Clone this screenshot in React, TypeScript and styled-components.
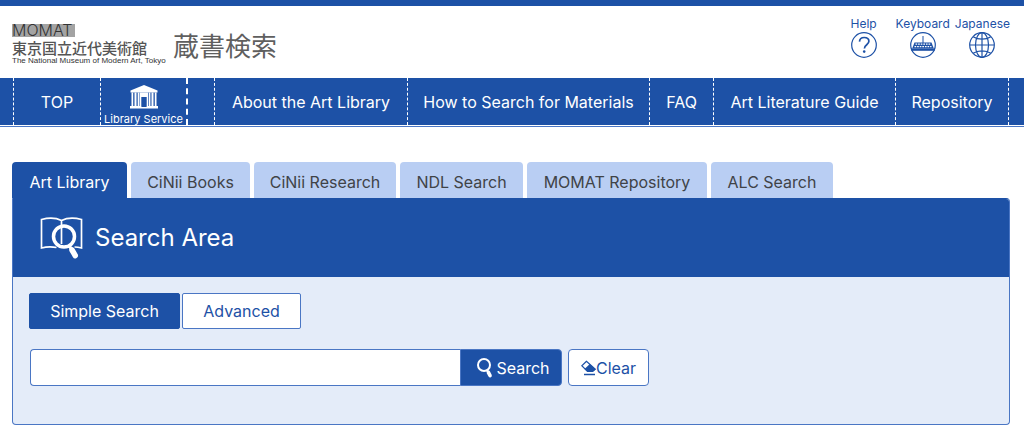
import React from 'react';
import styled, { createGlobalStyle } from 'styled-components';

const blue = '#1d51a6';
const line = '#4a76c4';

const GlobalStyle = createGlobalStyle`
  *, *::before, *::after { box-sizing: border-box; }
  body {
    margin: 0;
    background: #fff;
    color: #3c4043;
    font: 16px/24px Inter, "Noto Sans CJK JP", sans-serif;
  }
  button, input { font: inherit; }
  a { color: inherit; text-decoration: none; }
  svg { flex-shrink: 0; }
`;

const Header = styled.header`
  display: flex;
  justify-content: space-between;
  align-items: flex-start;
  height: 78px;
  padding: 8px 14px 0 12px;
  border-top: 6px solid ${blue};
`;

const Brand = styled.a`
  display: flex;
  align-items: flex-start;
  gap: 4px;
  padding-top: 6px;
`;

const Museum = styled.span`
  display: flex;
  flex-direction: column;
  width: 157px;
`;

const MuseumName = styled.span`
  font: 500 15px/16px "Noto Sans CJK JP", sans-serif;
  color: #555;
  white-space: nowrap;
`;

const MuseumSub = styled.span`
  font: 8px/10px "Liberation Sans", Arial, sans-serif;
  color: #333;
  white-space: nowrap;
`;

const SiteTitle = styled.h1`
  margin: 0;
  padding-top: 7px;
  font: 400 26px/36px "Noto Sans CJK JP", sans-serif;
  color: #5f5f5f;
  white-space: nowrap;
`;

const Tools = styled.nav`
  display: flex;
  gap: 5px;
`;

const Tool = styled.a`
  display: flex;
  flex-direction: column;
  align-items: center;
  min-width: 54px;
  padding-top: 1px;
  font-size: 12px;
  line-height: 17px;
  color: ${blue};
`;

const NavBar = styled.nav`
  display: flex;
  height: 47px;
  padding-left: 13px;
  background: ${blue};
  box-shadow: 0 1px 0 #fff, 0 2px 0 ${line};
`;

const NavItem = styled.a<{ $basis: number; $first?: boolean }>`
  display: flex;
  align-items: center;
  justify-content: center;
  flex: 0 1 ${p => p.$basis}px;
  border-right: 1px dashed #fff;
  border-left: ${p => (p.$first ? '1px dashed #fff' : '0')};
  color: #fff;
  white-space: nowrap;
`;

const LibraryItem = styled.a`
  display: flex;
  flex-direction: column;
  align-items: center;
  flex: 0 1 87px;
  padding-top: 7px;
  border-right: 2px dashed #fff;
  color: #fff;
  font-size: 11px;
  line-height: 14px;
  white-space: nowrap;
`;

const NavGap = styled.span`
  flex: 0 1 27px;
  border-right: 1px dashed #fff;
`;

const Main = styled.main`
  padding: 37px 14px 12px 12px;
`;

const Tabs = styled.div`
  display: flex;
  gap: 4px;
`;

const Tab = styled.button<{ $basis: number; $active?: boolean }>`
  flex: 0 1 ${p => p.$basis}px;
  height: 36px;
  padding: 3px 0 0;
  border: 0;
  border-radius: 4px 4px 0 0;
  background: ${p => (p.$active ? blue : '#b9cef3')};
  color: ${p => (p.$active ? '#fff' : '#404347')};
  white-space: nowrap;
`;

const Panel = styled.section`
  border: 1px solid ${line};
  border-top-color: ${blue};
  border-radius: 0 4px 4px 4px;
  background: #e4ecf9;
  overflow: hidden;
`;

const PanelHead = styled.div`
  display: flex;
  align-items: center;
  gap: 12px;
  height: 78px;
  padding-left: 27px;
  background: ${blue};
`;

const PanelTitle = styled.h2`
  margin: 0;
  font-size: 24px;
  line-height: 32px;
  font-weight: 400;
  color: #fff;
`;

const PanelBody = styled.form`
  padding: 16px 16px 38px;
`;

const Modes = styled.div`
  display: flex;
  gap: 2px;
`;

const ModeButton = styled.button<{ $basis: number; $active?: boolean }>`
  flex: 0 1 ${p => p.$basis}px;
  height: 36px;
  padding: 0;
  border: 1px solid ${p => (p.$active ? blue : line)};
  border-radius: 2px;
  background: ${p => (p.$active ? blue : '#fff')};
  color: ${p => (p.$active ? '#fff' : blue)};
`;

const SearchRow = styled.div`
  display: flex;
  margin-top: 20px;
  padding-left: 1px;
`;

const SearchInput = styled.input`
  flex: 0 1 430px;
  min-width: 0;
  height: 37px;
  padding: 0 8px;
  border: 1px solid ${line};
  border-right: 0;
  border-radius: 4px 0 0 4px;
  background: #fff;
`;

const SubmitButton = styled.button`
  display: flex;
  align-items: center;
  justify-content: center;
  gap: 3px;
  width: 102px;
  height: 37px;
  padding: 0 0 0 4px;
  border: 1px solid ${line};
  border-radius: 0 4px 4px 0;
  background: ${blue};
  color: #fff;
`;

const ClearButton = styled.button`
  display: flex;
  align-items: center;
  justify-content: center;
  width: 81px;
  height: 37px;
  margin-left: 6px;
  padding: 0;
  border: 1px solid ${line};
  border-radius: 4px;
  background: #fff;
  color: ${blue};
`;

const MomatMark = () => (
  <svg width="66" height="20" viewBox="0 0 66 20" aria-hidden="true">
    <rect y="4" width="63" height="13" fill="#a3a3a3" />
    <text x="0" y="16" fontFamily="Inter, sans-serif" fontSize="16" fontWeight="300" fill="#333">MOMAT</text>
  </svg>
);

const HelpIcon = () => (
  <svg width="26" height="26" viewBox="0 0 26 26" fill="none" stroke={blue} aria-hidden="true">
    <circle cx="13" cy="13" r="12.3" strokeWidth="1.2" />
    <path d="M8.500 9.600C8.700 6.800 10.500 5.500 13.200 5.500c2.700 0 4.700 1.400 4.700 3.800 0 3.500-4.500 3.400-4.500 7.200" strokeWidth="1.700" />
    <circle cx="13.200" cy="19.600" r="1.300" fill={blue} stroke="none" />
  </svg>
);

const KeyboardIcon = () => (
  <svg width="26" height="26" viewBox="0 0 26 26" fill="none" stroke={blue} aria-hidden="true">
    <circle cx="13" cy="13" r="12.300" strokeWidth="1.200" />
    <path d="M13 4v7" strokeWidth="1" />
    <path d="M4.500 10.500h17l2.300 6H2.200z" fill={blue} stroke="none" />
    <path d="M5.500 12.200h15M4.500 14.700h17" stroke="#fff" strokeWidth="1.300" strokeDasharray="1.700 .9" />
    <path d="M1.300 17.600h23.400" strokeWidth="2.400" />
  </svg>
);

const GlobeIcon = () => (
  <svg width="26" height="26" viewBox="0 0 26 26" fill="none" stroke={blue} strokeWidth="1.200" aria-hidden="true">
    <circle cx="13" cy="13" r="12.300" />
    <ellipse cx="13" cy="13" rx="6.500" ry="12.300" />
    <path d="M13 1v24M1 13h24M4.200 4.800c4.500 3.200 13.100 3.200 17.600 0M4.200 21.200c4.500-3.200 13.100-3.200 17.600 0" />
  </svg>
);

const LibraryIcon = () => (
  <svg width="30" height="27" viewBox="0 0 30 27" fill="#fff" aria-hidden="true">
    <path d="M15 0l13.500 5.500V7.500h-27V5.500z" />
    <path d="M2.500 7.500h1.700v14H2.500zM5.500 7.500h2v14h-2zM8.700 7.500h1.800v14H8.700zM11 7.500h8v4.500h-8zM11 7.500h1.300v14H11zM17.700 7.500H19v14h-1.300zM19.700 7.500h1.700v14h-1.700zM22.500 7.500h2v14h-2zM25.800 7.500h1.700v14h-1.700z" />
    <path d="M1 21h11.300v1H1zM17.700 21H29v1H17.700zM1 22h28v1.500H1z" />
  </svg>
);

const BookSearchIcon = () => (
  <svg width="43" height="42" viewBox="0 0 43 42" fill="none" stroke="#fff" strokeWidth="1.700" aria-hidden="true">
    <path d="M21.500 3.500C16 .8 8 .8 1.500 2.500V31c6-1.700 10.500-1.500 15-.5M21.500 3.500C27 .8 35 .8 41.500 2.500V31c-2.500-.7-5-1-7-1M21.500 3.500V27" />
    <circle cx="24" cy="19.500" r="10.500" strokeWidth="3.500" />
    <path d="M29.500 29l2 3.500" strokeWidth="3" />
    <path d="M32 33l3.200 5.500" strokeWidth="5.500" strokeLinecap="round" />
  </svg>
);

const GlassIcon = () => (
  <svg width="17" height="20" viewBox="0 0 17 20" fill="none" stroke="#fff" aria-hidden="true">
    <circle cx="8" cy="7" r="6" strokeWidth="2" />
    <path d="M11 12l1 2" strokeWidth="2.200" />
    <path d="M12.500 14.500l1.500 3" strokeWidth="3.700" strokeLinecap="round" />
  </svg>
);

const EraserIcon = () => (
  <svg width="15" height="16" viewBox="0 0 15 16" fill="none" stroke={blue} aria-hidden="true">
    <path d="M5.500 1.200L.8 5.700l5.700 5.800h5.200l2.500-2.300z" strokeWidth="1.200" />
    <path d="M8.800 4L3.500 9l3 2.800h5.200l3-2.300z" fill={blue} stroke="none" />
    <path d="M3 14.500h11" strokeWidth="1.500" />
  </svg>
);

const navItems = [
  { label: 'About the Art Library', basis: 193 },
  { label: 'How to Search for Materials', basis: 242 },
  { label: 'FAQ', basis: 64 },
  { label: 'Art Literature Guide', basis: 182 },
  { label: 'Repository', basis: 113 },
];

const tabs = [
  { label: 'Art Library', basis: 115 },
  { label: 'CiNii Books', basis: 119 },
  { label: 'CiNii Research', basis: 142 },
  { label: 'NDL Search', basis: 123 },
  { label: 'MOMAT Repository', basis: 180 },
  { label: 'ALC Search', basis: 122 },
];

export default function App() {
  return (
    <>
      <GlobalStyle />
      <Header>
        <Brand href="#">
          <Museum>
            <MomatMark />
            <MuseumName>東京国立近代美術館</MuseumName>
            <MuseumSub>The National Museum of Modern Art, Tokyo</MuseumSub>
          </Museum>
          <SiteTitle>蔵書検索</SiteTitle>
        </Brand>
        <Tools aria-label="Tools">
          <Tool href="#"><span>Help</span><HelpIcon /></Tool>
          <Tool href="#"><span>Keyboard</span><KeyboardIcon /></Tool>
          <Tool href="#"><span>Japanese</span><GlobeIcon /></Tool>
        </Tools>
      </Header>
      <NavBar aria-label="Main">
        <NavItem href="#" $basis={88} $first>TOP</NavItem>
        <LibraryItem href="#"><LibraryIcon /><span>Library Service</span></LibraryItem>
        <NavGap />
        {navItems.map(item => (
          <NavItem key={item.label} href="#" $basis={item.basis}>{item.label}</NavItem>
        ))}
      </NavBar>
      <Main>
        <Tabs role="tablist">
          {tabs.map((tab, i) => (
            <Tab key={tab.label} type="button" role="tab" aria-selected={i === 0} $basis={tab.basis} $active={i === 0}>
              {tab.label}
            </Tab>
          ))}
        </Tabs>
        <Panel>
          <PanelHead>
            <BookSearchIcon />
            <PanelTitle>Search Area</PanelTitle>
          </PanelHead>
          <PanelBody onSubmit={e => e.preventDefault()}>
            <Modes>
              <ModeButton type="button" $basis={151} $active>Simple Search</ModeButton>
              <ModeButton type="button" $basis={119}>Advanced</ModeButton>
            </Modes>
            <SearchRow>
              <SearchInput type="text" aria-label="Search keywords" />
              <SubmitButton type="submit"><GlassIcon />Search</SubmitButton>
              <ClearButton type="reset"><EraserIcon />Clear</ClearButton>
            </SearchRow>
          </PanelBody>
        </Panel>
      </Main>
    </>
  );
}
